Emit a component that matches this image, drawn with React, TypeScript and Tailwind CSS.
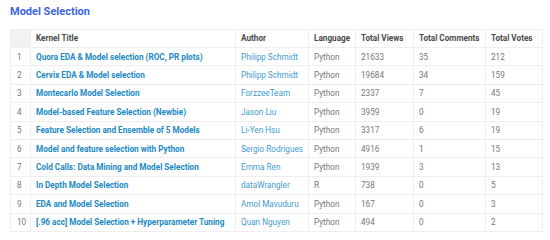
import React from "react";

const rows = [
  ["1", "Quora EDA & Model selection (ROC, PR plots)", "Philipp Schmidt", "Python", "21633", "35", "212"],
  ["2", "Cervix EDA & Model selection", "Philipp Schmidt", "Python", "19684", "34", "159"],
  ["3", "Montecarlo Model Selection", "ForzzeeTeam", "Python", "2337", "7", "45"],
  ["4", "Model-based Feature Selection (Newbie)", "Jason Liu", "Python", "3959", "0", "19"],
  ["5", "Feature Selection and Ensemble of 5 Models", "Li-Yen Hsu", "Python", "3317", "6", "19"],
  ["6", "Model and feature selection with Python", "Sergio Rodrigues", "Python", "4916", "1", "15"],
  ["7", "Cold Calls: Data Mining and Model Selection", "Emma Ren", "Python", "1939", "3", "13"],
  ["8", "In Depth Model Selection", "dataWrangler", "R", "738", "0", "5"],
  ["9", "EDA and Model Selection", "Amol Mavuduru", "Python", "167", "0", "3"],
  ["10", "[.96 acc] Model Selection + Hyperparameter Tuning", "Quan Nguyen", "Python", "494", "0", "2"],
];

const headers = ["Kernel Title", "Author", "Language", "Total Views", "Total Comments", "Total Votes"];

export default function App() {
  return (
    <div className="w-[550px] h-[240px] bg-white overflow-hidden" style={{ fontFamily: 'Roboto, sans-serif' }}>
      <div className="pl-[10px] pt-[3px] h-[29px]">
        <div className="text-[11px] font-bold text-[#3c66e0] leading-[18px]">Model Selection</div>
      </div>
      <table className="ml-[10px] w-[532px] table-fixed border-collapse text-[8.2px]">
        <colgroup>
          <col className="w-[20px]" />
          <col className="w-[205px]" />
          <col className="w-[73px]" />
          <col className="w-[47px]" />
          <col className="w-[58px]" />
          <col className="w-[72px]" />
          <col className="w-[57px]" />
        </colgroup>
        <thead>
          <tr className="h-[18px]">
            <th className="bg-[#f2f2f2] border border-[#eeeeee]"></th>
            {headers.map((h) => (
              <th key={h} className="border border-[#eeeeee] text-left font-bold text-[#4a4a4a] px-[5px] whitespace-nowrap">
                {h}
              </th>
            ))}
          </tr>
        </thead>
        <tbody>
          {rows.map((r) => (
            <tr key={r[0]} className="h-[18.4px]">
              <td className="border border-[#eeeeee] text-[#777] text-left pl-[6px]">{r[0]}</td>
              <td className="border border-[#eeeeee] px-[5px] font-bold text-[#2189c4] whitespace-nowrap">{r[1]}</td>
              <td className="border border-[#eeeeee] px-[5px] text-[#3f9bd2] whitespace-nowrap">{r[2]}</td>
              <td className="border border-[#eeeeee] px-[5px] text-[#777]">{r[3]}</td>
              <td className="border border-[#eeeeee] px-[5px] text-[#777]">{r[4]}</td>
              <td className="border border-[#eeeeee] px-[5px] text-[#777]">{r[5]}</td>
              <td className="border border-[#eeeeee] px-[5px] text-[#777]">{r[6]}</td>
            </tr>
          ))}
        </tbody>
      </table>
    </div>
  );
}
